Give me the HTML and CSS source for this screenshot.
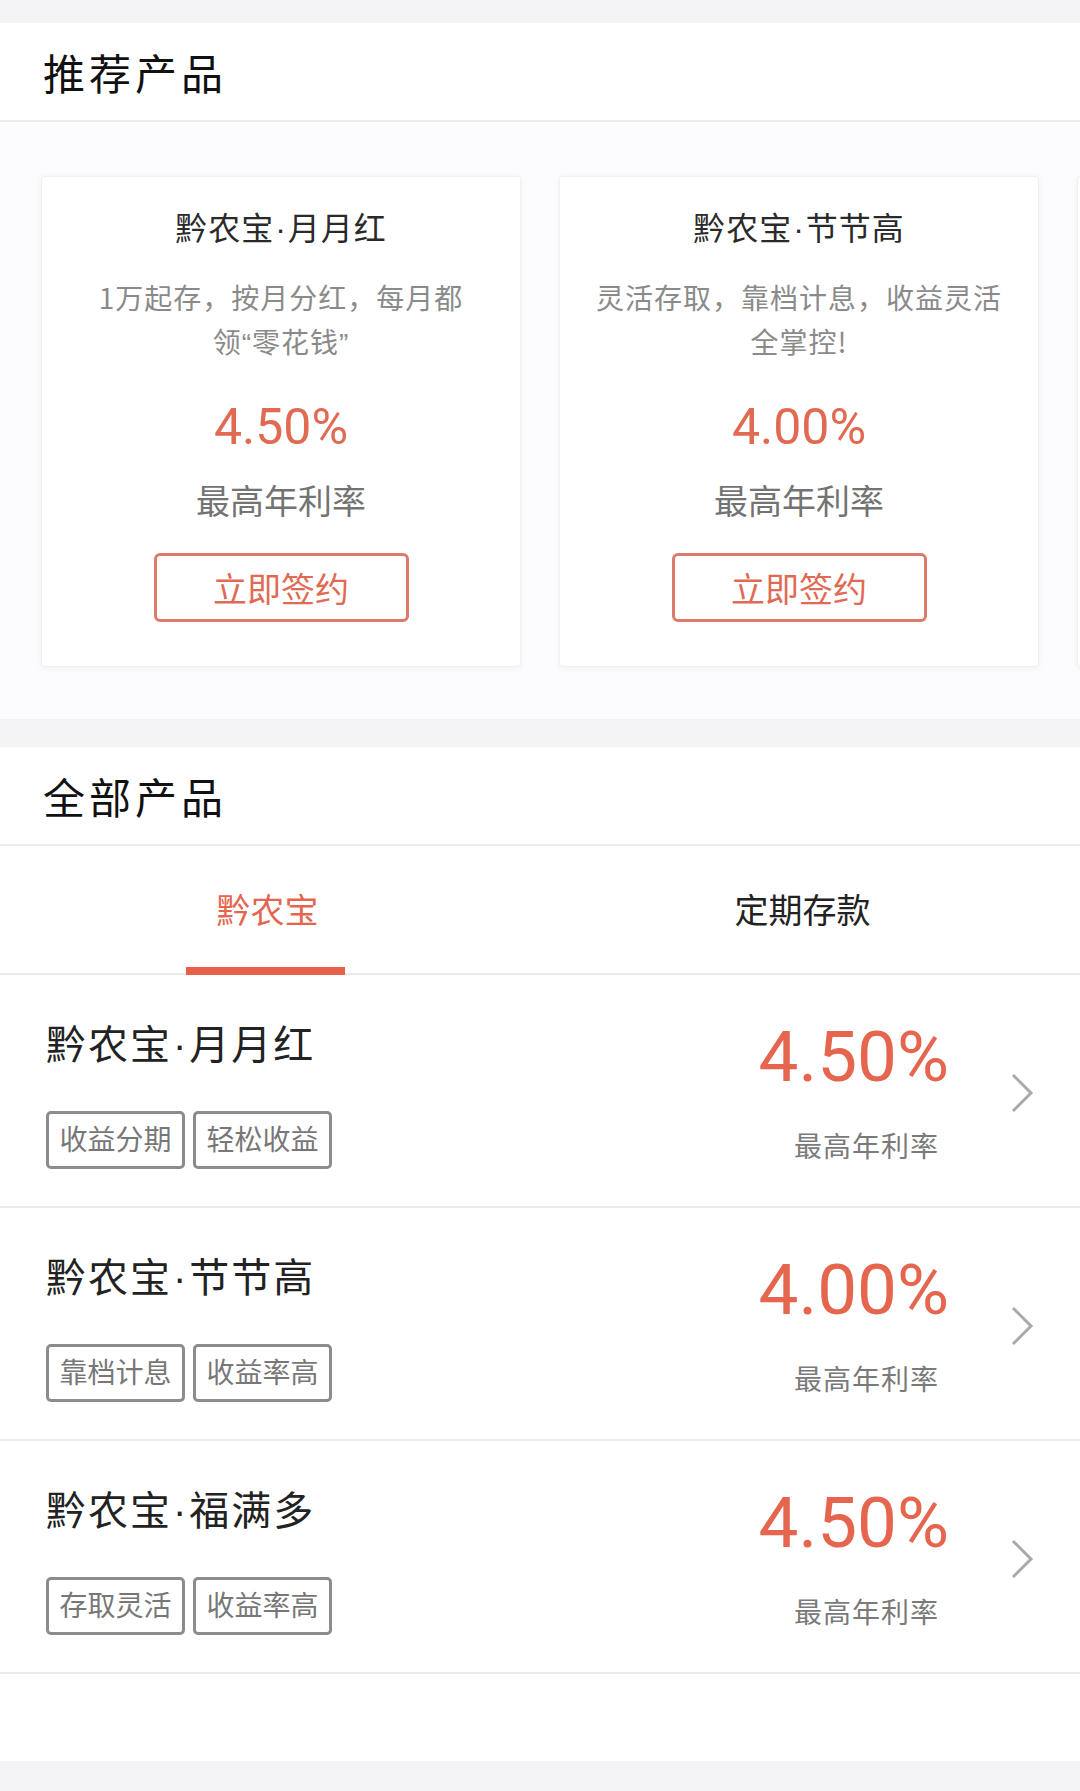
FILE: index.html
```html
<!DOCTYPE html>
<html lang="zh-CN">
<head>
<meta charset="utf-8">
<title>产品</title>
<link rel="stylesheet" href="styles.css">
</head>
<body>
<div class="page">
  <div class="gap-top"></div>

  <div class="section-head"><h2 class="section-title">推荐产品</h2></div>
  <div class="rec-area">
    <div class="card">
      <div class="card-title">黔农宝<span class="dot">·</span>月月红</div>
      <div class="card-desc">1万起存，按月分红，每月都<span class="nowrap">领<span class="q">“</span>零花钱<span class="q">”</span></span></div>
      <div class="card-rate">4.50%</div>
      <div class="card-label">最高年利率</div>
      <div class="card-btn">立即签约</div>
    </div>
    <div class="card">
      <div class="card-title">黔农宝<span class="dot">·</span>节节高</div>
      <div class="card-desc">灵活存取，靠档计息，收益灵活全掌控!</div>
      <div class="card-rate">4.00%</div>
      <div class="card-label">最高年利率</div>
      <div class="card-btn">立即签约</div>
    </div>
    <div class="card card-peek" aria-hidden="true"></div>
  </div>

  <div class="gap-band"></div>

  <div class="section-head"><h2 class="section-title">全部产品</h2></div>
  <div class="tabs">
    <div class="tab active">黔农宝<span class="tab-line"></span></div>
    <div class="tab">定期存款</div>
  </div>

  <div class="list">
    <div class="row">
      <div class="row-main">
        <div class="row-name">黔农宝<span class="dot">·</span>月月红</div>
        <div class="tags"><span class="tag">收益分期</span><span class="tag">轻松收益</span></div>
      </div>
      <div class="row-rate">
        <div class="rate">4.50%</div>
        <div class="rate-label">最高年利率</div>
      </div>
      <svg class="chev" viewBox="0 0 24 40" width="24" height="40"><path d="M3 2 L21 20 L3 38" fill="none" stroke="#a9a9ab" stroke-width="3"/></svg>
    </div>
    <div class="row">
      <div class="row-main">
        <div class="row-name">黔农宝<span class="dot">·</span>节节高</div>
        <div class="tags"><span class="tag">靠档计息</span><span class="tag">收益率高</span></div>
      </div>
      <div class="row-rate">
        <div class="rate">4.00%</div>
        <div class="rate-label">最高年利率</div>
      </div>
      <svg class="chev" viewBox="0 0 24 40" width="24" height="40"><path d="M3 2 L21 20 L3 38" fill="none" stroke="#a9a9ab" stroke-width="3"/></svg>
    </div>
    <div class="row">
      <div class="row-main">
        <div class="row-name">黔农宝<span class="dot">·</span>福满多</div>
        <div class="tags"><span class="tag">存取灵活</span><span class="tag">收益率高</span></div>
      </div>
      <div class="row-rate">
        <div class="rate">4.50%</div>
        <div class="rate-label">最高年利率</div>
      </div>
      <svg class="chev" viewBox="0 0 24 40" width="24" height="40"><path d="M3 2 L21 20 L3 38" fill="none" stroke="#a9a9ab" stroke-width="3"/></svg>
    </div>
  </div>
  <div class="list-foot"></div>
</div>
</body>
</html>
```
FILE: styles.css
```css
* { box-sizing: border-box; }
html, body { margin: 0; padding: 0; }
body {
  background: #f4f3f6;
  font-family: "Noto Sans CJK SC", "Noto Sans", sans-serif;
  color: #222;
}
.page { width: 1080px; overflow: hidden; }
.gap-top { height: 23px; }

.dot, .q {
  font-family: "Liberation Sans", Arial, sans-serif;
}
.dot { margin: 0 1px; }

.section-head {
  background: #fff;
  height: 99px;
  border-bottom: 2px solid #ebeaee;
  display: flex;
  align-items: center;
  padding-left: 43px;
}
.section-title {
  margin: 0;
  font-size: 42px;
  font-weight: 400;
  letter-spacing: 4px;
  color: #111;
  line-height: 1;
}

.rec-area {
  background: #fcfbfd;
  display: flex;
  gap: 38px;
  padding: 54px 0 52px 41px;
  overflow: hidden;
}
.card {
  flex: 0 0 480px;
  height: 491px;
  background: #fff;
  border: 1px solid #f1eff3;
  border-radius: 3px;
  box-shadow: 0 1px 6px rgba(60, 40, 80, 0.05);
  display: flex;
  flex-direction: column;
  align-items: center;
  padding: 29px 32px 0;
  text-align: center;
}
.card-title {
  font-size: 32px;
  line-height: 40px;
  color: #2a2a2a;
  letter-spacing: 1px;
}
.card-desc {
  margin-top: 26px;
  font-size: 28px;
  line-height: 44px;
  color: #8a8a8a;
  letter-spacing: 1px;
  height: 88px;
}
.nowrap { white-space: nowrap; }
.card-rate {
  margin-top: 34px;
  font-family: Roboto, "Liberation Sans", sans-serif;
  font-size: 50px;
  line-height: 60px;
  color: #e06a52;
}
.card-label {
  margin-top: 20px;
  font-size: 34px;
  line-height: 46px;
  color: #737373;
}
.card-btn {
  margin-top: 30px;
  width: 255px;
  height: 69px;
  border: 3px solid #dc7b69;
  border-radius: 6px;
  color: #df6b55;
  font-size: 34px;
  display: flex;
  align-items: center;
  justify-content: center;
}

.gap-band { height: 28px; }

.tabs {
  background: #fff;
  display: flex;
  height: 129px;
  border-bottom: 2px solid #ebeaee;
  padding-right: 10px;
}
.tab {
  flex: 1;
  position: relative;
  display: flex;
  align-items: center;
  justify-content: center;
  font-size: 34px;
  color: #222;
  padding-bottom: 2px;
}
.tab.active { color: #e5654f; }
.tab-line {
  position: absolute;
  left: calc(50% - 82px);
  width: 159px;
  bottom: -2px;
  height: 8px;
  background: #e8604a;
}

.list { background: #fff; }
.row {
  display: flex;
  align-items: flex-start;
  height: 233px;
  border-bottom: 2px solid #ebeaee;
  padding: 0 46px 0 46px;
}
.row-main { flex: 1; padding-top: 42px; }
.row-name {
  font-size: 40px;
  line-height: 50px;
  color: #222;
  letter-spacing: 2px;
}
.tags {
  display: flex;
  gap: 8px;
  margin-top: 41px;
}
.tag {
  width: 139px;
  height: 58px;
  border: 3px solid #8c8c8c;
  border-radius: 5px;
  display: flex;
  align-items: center;
  justify-content: center;
  font-size: 28px;
  color: #777;
  padding-bottom: 4px;
}
.row-rate {
  display: flex;
  flex-direction: column;
  align-items: flex-end;
  padding-top: 42px;
}
.rate {
  font-family: Roboto, "Liberation Sans", sans-serif;
  font-size: 71px;
  line-height: 80px;
  color: #e5654f;
}
.rate-label {
  margin-top: 30px;
  margin-right: 10px;
  font-size: 28px;
  line-height: 36px;
  letter-spacing: 1px;
  color: #7a7a7a;
}
.chev {
  align-self: center;
  margin-left: 61px;
  margin-top: 4px;
  flex: 0 0 auto;
}
.list-foot {
  height: 87px;
  background: #fff;
}
```
